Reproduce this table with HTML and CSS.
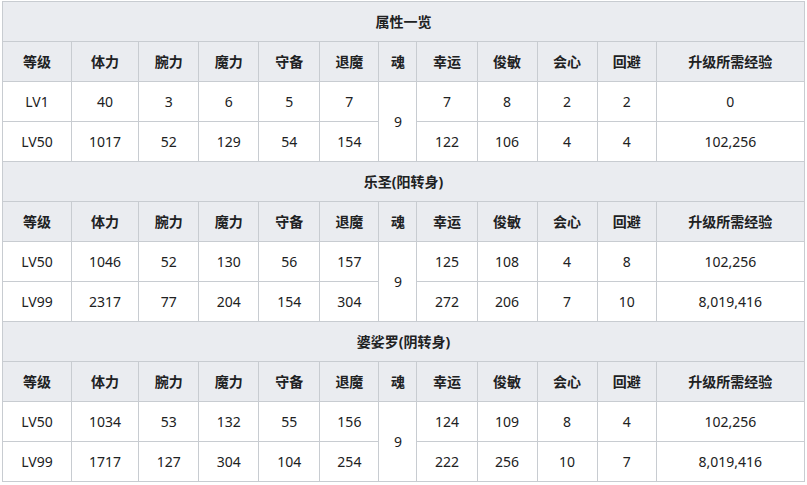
FILE: index.html
```html
<!DOCTYPE html>
<html lang="zh">
<head>
<meta charset="utf-8">
<link rel="stylesheet" href="styles.css">
</head>
<body>
<table class="wikitable">
<colgroup>
<col class="c-lv"><col class="c-hp"><col class="c-s"><col class="c-s"><col class="c-s1"><col class="c-s2"><col class="c-soul"><col class="c-s"><col class="c-s"><col class="c-s"><col class="c-s2"><col class="c-exp">
</colgroup>
<tbody>
<tr><th colspan="12" class="title">属性一览</th></tr>
<tr><th>等级</th><th>体力</th><th>腕力</th><th>魔力</th><th>守备</th><th>退魔</th><th>魂</th><th>幸运</th><th>俊敏</th><th>会心</th><th>回避</th><th>升级所需经验</th></tr>
<tr><td>LV1</td><td>40</td><td>3</td><td>6</td><td>5</td><td>7</td><td rowspan="2">9</td><td>7</td><td>8</td><td>2</td><td>2</td><td>0</td></tr>
<tr><td>LV50</td><td>1017</td><td>52</td><td>129</td><td>54</td><td>154</td><td>122</td><td>106</td><td>4</td><td>4</td><td>102,256</td></tr>
<tr><th colspan="12" class="title">乐圣(阳转身)</th></tr>
<tr><th>等级</th><th>体力</th><th>腕力</th><th>魔力</th><th>守备</th><th>退魔</th><th>魂</th><th>幸运</th><th>俊敏</th><th>会心</th><th>回避</th><th>升级所需经验</th></tr>
<tr><td>LV50</td><td>1046</td><td>52</td><td>130</td><td>56</td><td>157</td><td rowspan="2">9</td><td>125</td><td>108</td><td>4</td><td>8</td><td>102,256</td></tr>
<tr><td>LV99</td><td>2317</td><td>77</td><td>204</td><td>154</td><td>304</td><td>272</td><td>206</td><td>7</td><td>10</td><td>8,019,416</td></tr>
<tr><th colspan="12" class="title">婆娑罗(阴转身)</th></tr>
<tr><th>等级</th><th>体力</th><th>腕力</th><th>魔力</th><th>守备</th><th>退魔</th><th>魂</th><th>幸运</th><th>俊敏</th><th>会心</th><th>回避</th><th>升级所需经验</th></tr>
<tr><td>LV50</td><td>1034</td><td>53</td><td>132</td><td>55</td><td>156</td><td rowspan="2">9</td><td>124</td><td>109</td><td>8</td><td>4</td><td>102,256</td></tr>
<tr><td>LV99</td><td>1717</td><td>127</td><td>304</td><td>104</td><td>254</td><td>222</td><td>256</td><td>10</td><td>7</td><td>8,019,416</td></tr>
</tbody>
</table>
</body>
</html>
```
FILE: styles.css
```css
html, body {
  margin: 0;
  padding: 0;
  background: #ffffff;
}
body {
  padding: 1px 0 0 2px;
  font-family: "Noto Sans", "Noto Sans CJK SC", sans-serif;
  font-size: 14px;
  color: #202122;
}
.wikitable {
  border-collapse: collapse;
  table-layout: fixed;
  width: 803px;
  border: 1px solid #c8ccd1;
}
.wikitable th,
.wikitable td {
  border: 1px solid #c8ccd1;
  height: 40px;
  padding: 0;
  text-align: center;
  vertical-align: middle;
  line-height: 20px;
  box-sizing: border-box;
}
.wikitable th {
  background: #eaecf0;
  font-weight: bold;
}
.wikitable td {
  background: #ffffff;
}
.c-lv { width: 69px; }
.c-hp { width: 67px; }
.c-s { width: 60px; }
.c-s1 { width: 61px; }
.c-s2 { width: 59px; }
.c-soul { width: 38px; }
.c-exp { width: 148px; }
```
